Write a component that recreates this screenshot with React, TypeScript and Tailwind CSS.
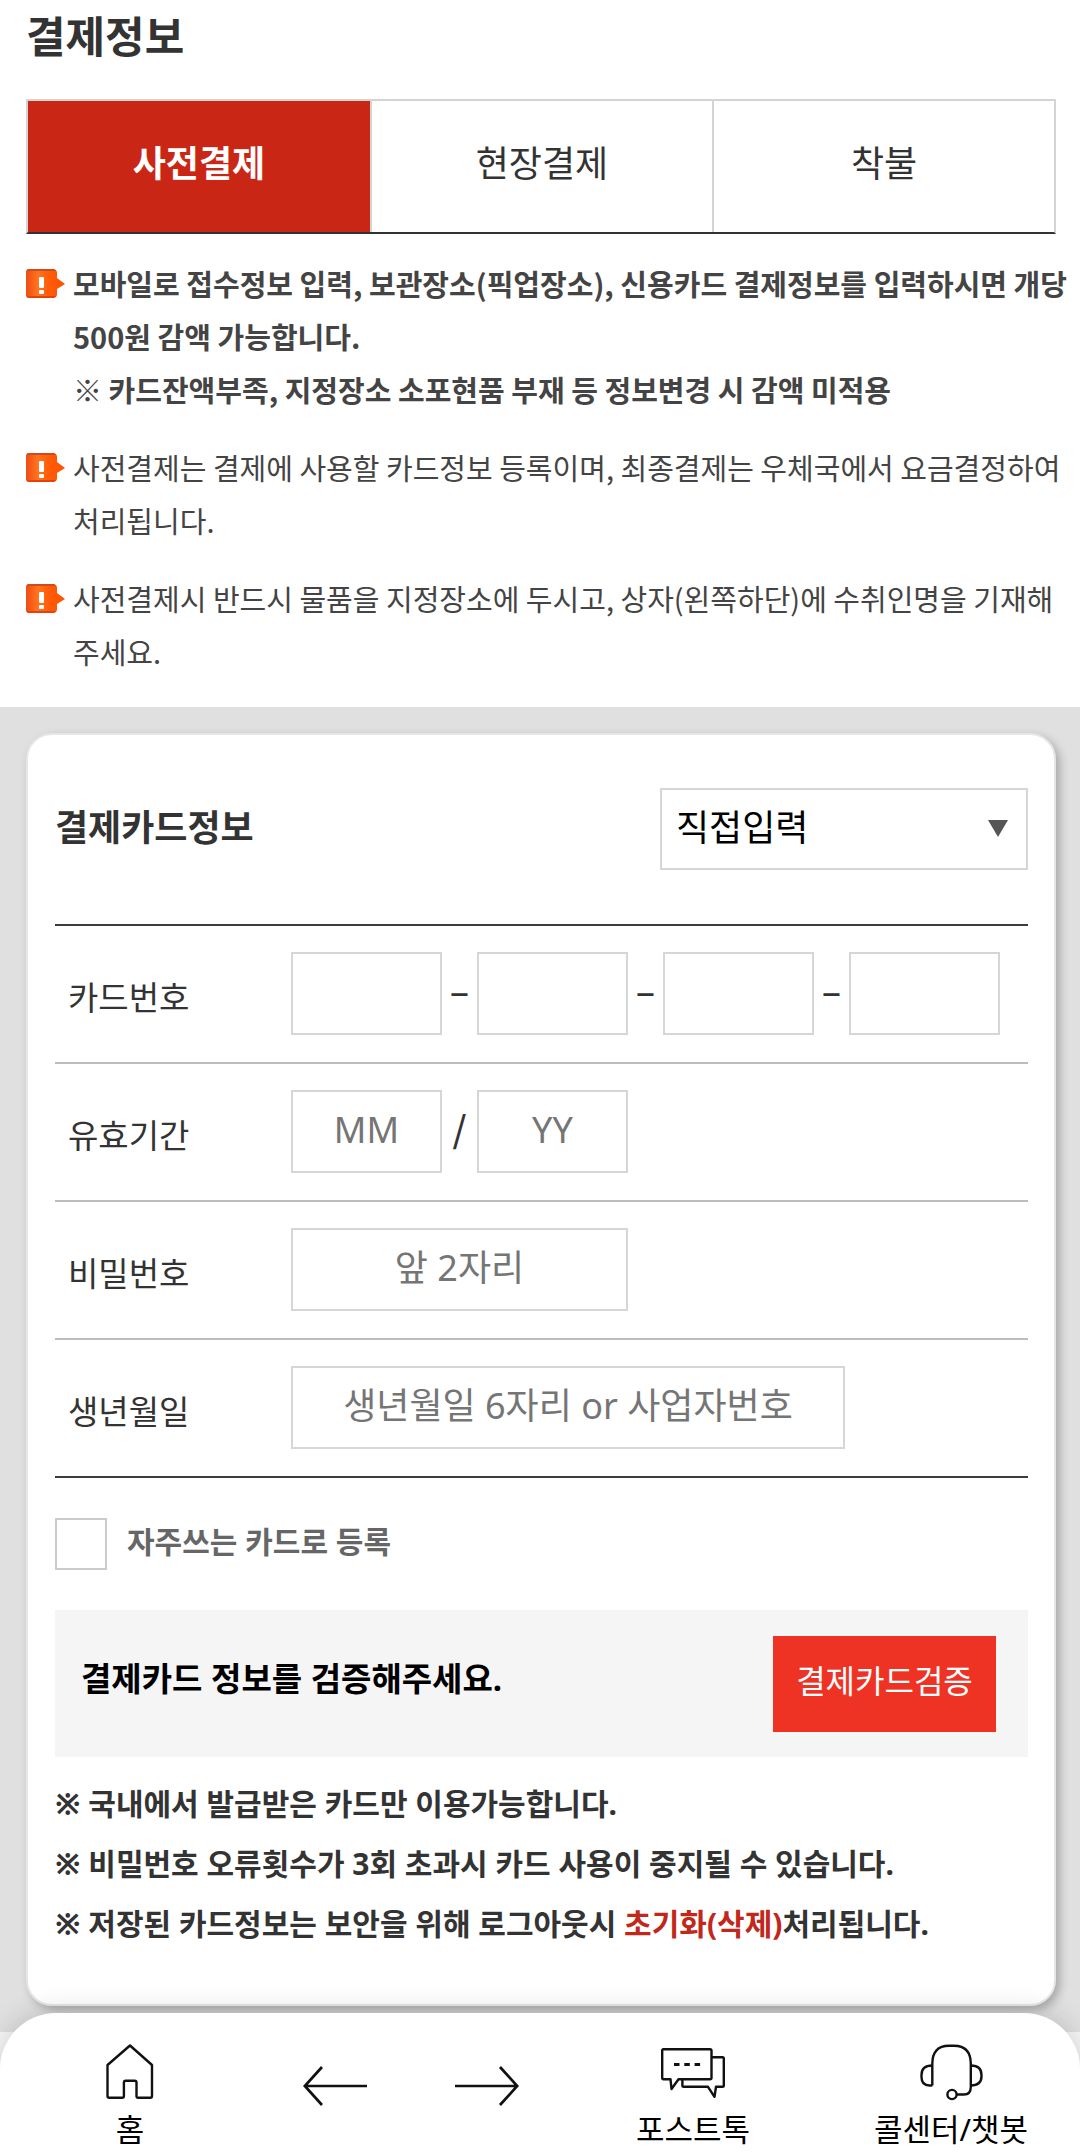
import { Fragment, useState } from "react";
import type { ReactNode } from "react";

type PayMethod = "prepaid" | "onsite" | "collect";

const TABS: { id: PayMethod; label: string }[] = [
  { id: "prepaid", label: "사전결제" },
  { id: "onsite", label: "현장결제" },
  { id: "collect", label: "착불" },
];

const CARD_PARTS = ["first", "second", "third", "fourth"];

const INPUT_CLASS =
  "h-[83px] min-w-0 border-2 border-[#d6d6d6] bg-white pb-1 text-center text-[36px] leading-[52px] text-[#333] outline-none placeholder:text-[#757575]";

const NoticeIcon = () => (
  <svg viewBox="0 0 39 29" className="mt-3 h-[29px] w-[39px] shrink-0" aria-hidden="true">
    <defs>
      <linearGradient id="notice" x1="0" y1="0" x2="1" y2="0">
        <stop offset="0" stopColor="#f04a12" />
        <stop offset="0.3" stopColor="#ff7420" />
        <stop offset="0.6" stopColor="#ff5a08" />
        <stop offset="1" stopColor="#ff5200" />
      </linearGradient>
    </defs>
    <path d="M3 0h24q3 0 4 3v6l8 6-8 5v6q-1 3-4 3H3q-3 0-3-3V3q0-3 3-3z" fill="url(#notice)" />
    <path d="M1 2q0-2 2-2h24q2 0 3 2z" fill="#cf4a1c" />
    <path d="M1 27h29q-1 2-3 2H3q-2 0-2-2z" fill="#e8400c" />
    <rect x="13" y="8" width="5" height="11" rx="1" fill="#fff" />
    <rect x="13" y="21" width="5" height="4" rx="1" fill="#fff" />
  </svg>
);

const HomeIcon = () => (
  <svg viewBox="0 0 48 56" className="h-14 w-12" fill="none" stroke="#111" strokeWidth="2.4" strokeLinejoin="round" aria-hidden="true">
    <path d="M24 1.5 46 21v31q0 1.8-1.8 1.8H32.2q-1.7 0-1.7-1.8V38.5q0-1.8-1.8-1.8h-9q-1.8 0-1.8 1.8V52q0 1.8-1.8 1.8H3.3q-1.8 0-1.8-1.8V21z" />
  </svg>
);

const ArrowIcon = ({ flipped }: { flipped?: boolean }) => (
  <svg
    viewBox="0 0 64 40"
    className={flipped ? "h-10 w-16 -scale-x-100" : "h-10 w-16"}
    fill="none"
    stroke="#111"
    strokeWidth="2.7"
    aria-hidden="true"
  >
    <path d="M64 20H2M19 1 1.8 20 19 39" />
  </svg>
);

const ChatIcon = () => (
  <svg viewBox="0 0 64 50" className="h-[50px] w-16" fill="none" stroke="#111" strokeWidth="2.4" strokeLinejoin="round" aria-hidden="true">
    <path d="M2.5 1.2h46.5q1.5 0 1.5 1.5v27q0 1.5-1.5 1.5H17.5L10.5 41l-1-9.8h-7q-1.3 0-1.3-1.5v-27q0-1.5 1.3-1.5z" />
    <path d="M51 9.2h10.5q1.3 0 1.3 1.3v27q0 1.3-1.3 1.3H55l-1.5 10-6.5-10H22.7q-1.3 0-1.3-1.3V31" />
    <path d="M13 16.5h5.5M23.3 16.5h5.5M33.6 16.5h5.5" strokeWidth="3" />
  </svg>
);

const HeadsetIcon = () => (
  <svg viewBox="0 0 63 57" className="h-[57px] w-[63px]" fill="none" stroke="#111" strokeWidth="2.4" strokeLinejoin="round" aria-hidden="true">
    <path d="M12.3 41.5V20Q12.3 1.8 29 1.8h5Q50.800 1.800 50.800 20v23q0 7.500-7 7.500H37" />
    <path d="M12.3 21.500Q1.500 21.500 1.500 31v2q0 8.500 8 8.500h2.800" />
    <path d="M50.800 21.500Q61.500 21.500 61.500 31v1q0 9.500-10.700 9.500" />
    <circle cx="32" cy="50.500" r="4.600" />
  </svg>
);

const Notice = ({ bold, children }: { bold?: boolean; children: ReactNode }) => (
  <li className={bold ? "flex gap-2 font-bold" : "flex gap-2"}>
    <NoticeIcon />
    <div className="break-keep font-['Noto_Sans_CJK_KR',sans-serif] text-[29px] leading-[53px] text-[#444]">
      {children}
    </div>
  </li>
);

const Separator = ({ children }: { children: ReactNode }) => (
  <span className="w-[35px] pb-2.5 text-center font-['Noto_Sans_CJK_KR',sans-serif] font-medium">{children}</span>
);

const FormRow = ({ label, htmlFor, children }: { label: string; htmlFor: string; children: ReactNode }) => (
  <div className="flex items-center border-b-2 border-[#bdbdbd] pb-[27px] pt-[26px] last:border-[#3c3c3c]">
    <label htmlFor={htmlFor} className="w-[236px] shrink-0 pl-[13px] pt-2 text-[33px] leading-[48px]">
      {label}
    </label>
    <div className="flex min-w-0 flex-1 items-center text-[36px] leading-[52px]">{children}</div>
  </div>
);

export default function App() {
  const [method, setMethod] = useState<PayMethod>("prepaid");

  return (
    <div className="bg-[#f7f7f7] font-['Noto_Sans','Noto_Sans_CJK_KR',sans-serif] text-[#333]">
      <section className="bg-white pb-[29px] pl-[26px] pr-2 pt-[5px]">
        <h1 className="text-[43px] font-bold leading-[64px]">결제정보</h1>

        <div role="tablist" className="mr-4 mt-[30px] grid grid-cols-3 border-2 border-[#d4d4d4] border-b-[#333]">
          {TABS.map((tab) => (
            <button
              key={tab.id}
              type="button"
              role="tab"
              aria-selected={method === tab.id}
              onClick={() => setMethod(tab.id)}
              className={`h-[131px] border-l-2 border-[#d4d4d4] pb-1.5 text-[36px] first:border-l-0 ${
                method === tab.id ? "bg-[#ca2615] font-bold text-white" : "bg-white"
              }`}
            >
              {tab.label}
            </button>
          ))}
        </div>

        <ul className="mt-[23px] flex flex-col gap-[25px]">
          <Notice bold>
            <p>모바일로 접수정보 입력, 보관장소(픽업장소), 신용카드 결제정보를 입력하시면 개당 500원 감액 가능합니다.</p>
            <p>※ 카드잔액부족, 지정장소 소포현품 부재 등 정보변경 시 감액 미적용</p>
          </Notice>
          <Notice>
            <p>사전결제는 결제에 사용할 카드정보 등록이며, 최종결제는 우체국에서 요금결정하여 처리됩니다.</p>
          </Notice>
          <Notice>
            <p>사전결제시 반드시 물품을 지정장소에 두시고, 상자(왼쪽하단)에 수취인명을 기재해 주세요.</p>
          </Notice>
        </ul>
      </section>

      <main className="bg-[#e0e0e0] py-[26px] pl-[26px] pr-6">
        <form
          className="rounded-[26px] border-2 border-[#e6e6e6] bg-white pb-[50px] pl-[27px] pr-[26px] pt-[53px] shadow-[4px_4px_10px_rgba(0,0,0,0.25)]"
          onSubmit={(e) => e.preventDefault()}
        >
          <div className="flex items-center justify-between">
            <h2 className="pb-0.5 text-[36px] font-bold leading-[52px]">결제카드정보</h2>
            <div className="relative w-[368px]">
              <select
                aria-label="결제카드 선택"
                className="h-[82px] w-full appearance-none border-2 border-[#d6d6d6] bg-white pb-0.5 pl-3.5 text-[36px] text-black outline-none"
              >
                <option>직접입력</option>
              </select>
              <svg viewBox="0 0 20 17" className="pointer-events-none absolute right-5 top-8 h-[17px] w-5" aria-hidden="true">
                <path d="M0 0h20L10 17z" fill="#555" />
              </svg>
            </div>
          </div>

          <div className="mt-[54px] border-t-2 border-[#3c3c3c]">
            <FormRow label="카드번호" htmlFor="card-first">
              {CARD_PARTS.map((part, i) => (
                <Fragment key={part}>
                  {i > 0 && <Separator>–</Separator>}
                  <input
                    id={`card-${part}`}
                    aria-label={`카드번호 ${i + 1}`}
                    inputMode="numeric"
                    maxLength={4}
                    className={`w-[151px] ${INPUT_CLASS}`}
                  />
                </Fragment>
              ))}
            </FormRow>
            <FormRow label="유효기간" htmlFor="exp-month">
              <input id="exp-month" placeholder="MM" maxLength={2} className={`w-[151px] ${INPUT_CLASS}`} />
              <Separator>/</Separator>
              <input aria-label="유효기간 연도" placeholder="YY" maxLength={2} className={`w-[151px] ${INPUT_CLASS}`} />
            </FormRow>
            <FormRow label="비밀번호" htmlFor="card-pin">
              <input id="card-pin" type="password" placeholder="앞 2자리" maxLength={2} className={`w-[337px] ${INPUT_CLASS}`} />
            </FormRow>
            <FormRow label="생년월일" htmlFor="birth">
              <input id="birth" placeholder="생년월일 6자리 or 사업자번호" className={`w-[554px] ${INPUT_CLASS}`} />
            </FormRow>
          </div>

          <div className="mt-10 flex items-center gap-5">
            <input
              id="save-card"
              type="checkbox"
              className="size-[52px] appearance-none border-2 border-[#ccc] bg-white checked:bg-[#ca2615]"
            />
            <label htmlFor="save-card" className="pb-1 text-[30px] font-bold leading-[44px] text-[#666]">
              자주쓰는 카드로 등록
            </label>
          </div>

          <div className="mt-10 flex items-center justify-between bg-[#f5f5f5] pb-[25px] pl-[26px] pr-8 pt-[26px]">
            <p className="pb-2.5 text-[33px] font-bold leading-[48px] text-black">결제카드 정보를 검증해주세요.</p>
            <button type="button" className="h-24 w-[223px] bg-[#ee3325] pb-1.5 text-[32px] text-white">
              결제카드검증
            </button>
          </div>

          <ul className="mt-[17px] text-[30px] font-bold leading-[60px]">
            <li>※ 국내에서 발급받은 카드만 이용가능합니다.</li>
            <li>※ 비밀번호 오류횟수가 3회 초과시 카드 사용이 중지될 수 있습니다.</li>
            <li>
              ※ 저장된 카드정보는 보안을 위해 로그아웃시 <em className="not-italic text-[#c1271a]">초기화(삭제)</em>처리됩니다.
            </li>
          </ul>
        </form>
      </main>

      <nav className="relative -mt-[19px] grid grid-cols-[260fr_150fr_154fr_258fr_258fr] rounded-t-[56px] bg-white pb-[5px] pt-[31px] text-[31px] leading-[44px] text-black shadow-[0_0_28px_rgba(0,0,0,0.18)]">
        <a href="#home" className="flex flex-col items-center">
          <span className="flex h-[63px] items-start">
            <HomeIcon />
          </span>
          홈
        </a>
        <button type="button" aria-label="이전" className="flex justify-center pt-[22px]">
          <ArrowIcon />
        </button>
        <button type="button" aria-label="다음" className="flex justify-center pt-[22px]">
          <ArrowIcon flipped />
        </button>
        <a href="#talk" className="flex flex-col items-center">
          <span className="flex h-[63px] items-start pt-1">
            <ChatIcon />
          </span>
          포스트톡
        </a>
        <a href="#callcenter" className="flex flex-col items-center">
          <span className="flex h-[63px] items-start">
            <HeadsetIcon />
          </span>
          콜센터/챗봇
        </a>
      </nav>
    </div>
  );
}
